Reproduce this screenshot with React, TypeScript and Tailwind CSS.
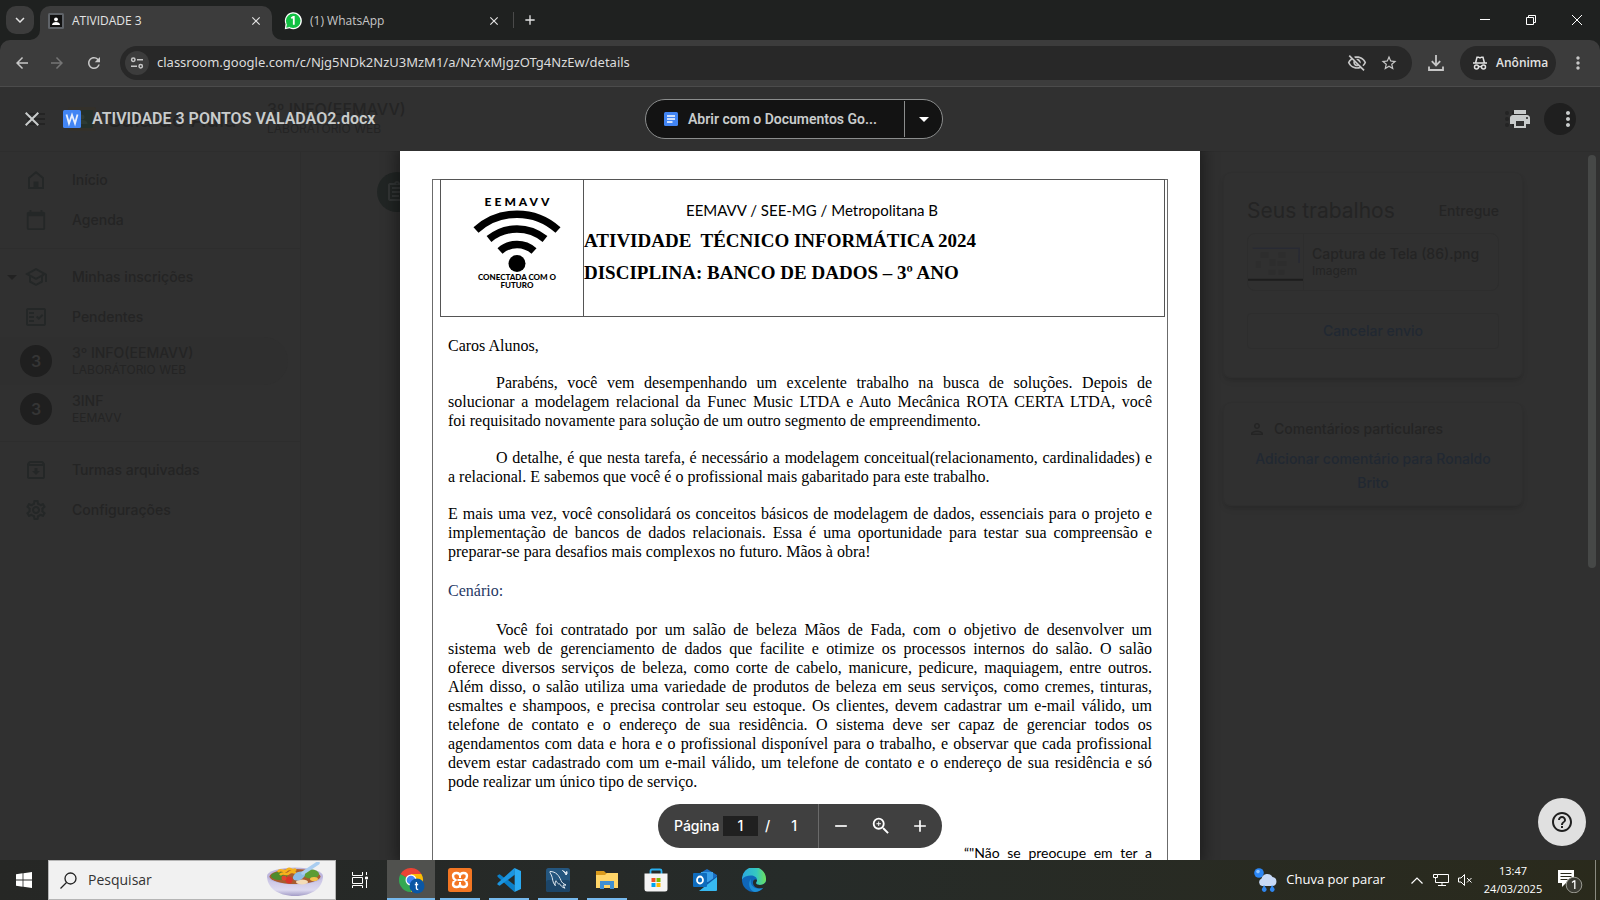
import type { ReactNode } from 'react';
import {
  MdAdd,
  MdArrowBack,
  MdArrowDropDown,
  MdArrowForward,
  MdCalendarToday,
  MdClose,
  MdHelpOutline,
  MdKeyboardArrowDown,
  MdLocalPrintshop,
  MdMenu,
  MdMoreVert,
  MdOutlineArchive,
  MdOutlineAssignment,
  MdOutlineFactCheck,
  MdOutlinePerson,
  MdOutlineSchool,
  MdOutlineSettings,
  MdOutlineVisibilityOff,
  MdRefresh,
  MdRemove,
  MdStarBorder,
  MdZoomIn,
} from 'react-icons/md';

/* ---------- Browser chrome ---------- */

function ClassroomFavicon() {
  return (
    <svg viewBox="0 0 16 16" className="size-4">
      <rect width="16" height="16" rx="1.500" fill="#5f6368" />
      <rect x="2" y="2" width="12" height="12" fill="#111" />
      <circle cx="8" cy="6.300" r="1.900" fill="#fff" />
      <path d="M4 12c0-2 2-3 4-3s4 1 4 3z" fill="#fff" />
    </svg>
  );
}

function WhatsAppFavicon() {
  return (
    <svg viewBox="0 0 18 18" className="size-[18px]">
      <path d="M.8 17.300L1.500 12A8.500 8.500 0 1 1 5.500 16.300z" fill="#fff" />
      <circle cx="9.200" cy="8.800" r="7.300" fill="#12c143" />
      <path d="M2.200 15.800l.8-3.500 2.700 2.700z" fill="#12c143" />
      <path d="M7.300 6.300l2-1.500h.5v8" fill="none" stroke="#fff" strokeWidth="1.800" />
    </svg>
  );
}

function TabStrip() {
  return (
    <header className="flex h-10 shrink-0 items-stretch bg-[#1f2120] text-xs text-[#e3e3e3]">
      <button aria-label="Pesquisar guias" className="mt-1.5 ml-1.5 flex size-7 items-center justify-center rounded-[10px] bg-[#3c3c3c]">
        <MdKeyboardArrowDown className="size-[18px]" />
      </button>
      <div className="relative ml-1.5 mt-1.5 flex w-[232px] items-center rounded-t-[10px] bg-[#3c3c3c] px-2 pb-1">
        <ClassroomFavicon />
        <span className="ml-2 grow">ATIVIDADE 3</span>
        <button aria-label="Fechar ATIVIDADE 3" className="flex size-4 items-center justify-center">
          <MdClose className="size-3.5" />
        </button>
        <svg viewBox="0 0 10 10" className="absolute -left-2.5 bottom-0 size-2.5">
          <path d="M10 0v10H0A10 10 0 0 0 10 0z" fill="#3c3c3c" />
        </svg>
        <svg viewBox="0 0 10 10" className="absolute -right-2.5 bottom-0 size-2.5">
          <path d="M0 0v10h10A10 10 0 0 1 0 0z" fill="#3c3c3c" />
        </svg>
      </div>
      <div className="ml-3 flex w-[229px] items-center pt-0.5 pr-[11px]">
        <WhatsAppFavicon />
        <span className="ml-2 grow text-[#c7c7c7]">(1) WhatsApp</span>
        <button aria-label="Fechar WhatsApp" className="flex size-4 items-center justify-center">
          <MdClose className="size-3.5" />
        </button>
      </div>
      <span className="mt-3 h-4 w-px bg-[#4a4a4a]" />
      <button aria-label="Nova guia" className="flex w-8 items-center justify-center">
        <MdAdd className="size-4" />
      </button>
      <div className="ml-auto flex items-stretch text-white">
        <button aria-label="Minimizar" className="flex w-[46px] items-center justify-center">
          <svg viewBox="0 0 10 10" className="size-2.5" stroke="currentColor">
            <path d="M0 4.500h10" />
          </svg>
        </button>
        <button aria-label="Restaurar" className="flex w-[46px] items-center justify-center">
          <svg viewBox="0 0 10 10" className="size-2.5" stroke="currentColor" fill="none">
            <path d="M.5 2.500h7v7h-7zM2.500 2.500v-2h7v7h-2" />
          </svg>
        </button>
        <button aria-label="Fechar" className="flex w-[46px] items-center justify-center">
          <svg viewBox="0 0 10 10" className="size-2.5" stroke="currentColor">
            <path d="M0 0l10 10M10 0L0 10" />
          </svg>
        </button>
      </div>
    </header>
  );
}

function Toolbar() {
  return (
    <div className="bg-[#1f2120]">
      <nav className="flex h-[47px] shrink-0 items-start rounded-t-[10px] border-b border-[#4b4b4b] bg-[#3c3c3c] pt-1.5 text-[#c7c7c7]">
        <button aria-label="Voltar" className="ml-1 flex h-[34px] w-[35px] items-center justify-center">
          <MdArrowBack className="size-[18px]" />
        </button>
        <button aria-label="Avançar" className="flex h-[34px] w-9 items-center justify-center text-[#757575]">
          <MdArrowForward className="size-[18px]" />
        </button>
        <button aria-label="Atualizar" className="flex h-[34px] w-[37px] items-center justify-center">
          <MdRefresh className="size-[18px]" />
        </button>
        <div className="ml-2 flex h-[34px] grow items-center rounded-full bg-[#282828] px-[5px]">
          <button aria-label="Informações do site" className="flex size-6 items-center justify-center rounded-full bg-[#3c3c3c]">
            <svg viewBox="0 0 14 14" className="size-3.5" fill="none" stroke="currentColor" strokeWidth="1.500">
              <circle cx="3.300" cy="3.800" r="1.700" />
              <path d="M7 3.800h6M1 10.200h6" />
              <circle cx="10.700" cy="10.200" r="1.700" />
            </svg>
          </button>
          <input
            aria-label="Barra de endereço"
            defaultValue="classroom.google.com/c/Njg5NDk2NzU3MzM1/a/NzYxMjgzOTg4NzEw/details"
            className="ml-2 w-0 grow bg-transparent font-['Noto_Sans',sans-serif] text-[13px] text-[#dcdcdc] outline-none"
          />
          <button aria-label="Cookies bloqueados" className="flex w-8 items-center justify-center">
            <MdOutlineVisibilityOff className="size-5" />
          </button>
          <button aria-label="Adicionar aos favoritos" className="mr-0.5 flex w-8 items-center justify-center">
            <MdStarBorder className="size-[18px]" />
          </button>
        </div>
        <button aria-label="Downloads" className="mx-3 flex h-[34px] w-6 items-center justify-end">
          <svg viewBox="0 0 16 16" className="mr-1 size-4" fill="none" stroke="currentColor" strokeWidth="1.800">
            <path d="M8 0v10M3.800 6.200L8 10.400l4.200-4.200M1 11.500V15h14v-3.500" />
          </svg>
        </button>
        <button className="flex h-[34px] w-24 items-center gap-2 rounded-full bg-[#282828] pl-3 text-xs font-semibold text-[#e3e3e3]">
          <svg viewBox="0 0 16 16" className="size-4" fill="none" stroke="currentColor" strokeWidth="1.500">
            <path d="M1 8h14M3.700 7.500L5 2.200h1.500L8 3l1.500-.8H11l1.300 5.300" />
            <circle cx="4.500" cy="12" r="2" />
            <circle cx="11.500" cy="12" r="2" />
            <path d="M6.500 11.600h3" />
          </svg>
          Anônima
        </button>
        <button aria-label="Menu do Chrome" className="flex h-[34px] w-11 items-center justify-center">
          <MdMoreVert className="size-5" />
        </button>
      </nav>
    </div>
  );
}

/* ---------- Classroom page under the viewer ---------- */

type SideLinkProps = { icon: ReactNode; label: string; caret?: boolean };

function HomeIcon() {
  return (
    <svg viewBox="0 0 24 24" className="size-6">
      <path d="M5 10l7-5.700L19 10v10H5z" fill="none" stroke="currentColor" strokeWidth="2" />
      <path d="M9.500 13.500h5V20h-5z" fill="currentColor" />
    </svg>
  );
}

function SideLink({ icon, label, caret }: SideLinkProps) {
  return (
    <a href="#" className="flex h-10 items-center text-sm font-medium">
      <span className="flex w-6 justify-center">{caret && <MdArrowDropDown className="size-6 text-[#222]" />}</span>
      <span className="flex w-6 justify-center text-2xl text-[#242727]">{icon}</span>
      <span className="ml-6">{label}</span>
    </a>
  );
}

function ClassLink({ name, section, active }: { name: string; section: string; active?: boolean }) {
  return (
    <a href="#" className={`mr-3 flex h-12 items-center rounded-r-full pl-5 ${active ? 'bg-[#2f2f2f]' : ''}`}>
      <span className="flex size-8 items-center justify-center rounded-full bg-[#1f1f1f] text-base font-semibold text-[#353535]">3</span>
      <span className="ml-5 flex flex-col">
        <span className="text-sm leading-[18px] font-medium">{name}</span>
        <span className="text-xs leading-4">{section}</span>
      </span>
    </a>
  );
}

function Classroom() {
  return (
    <div className="col-start-1 row-start-1 flex min-h-0 flex-col bg-[#303030] font-[Inter,sans-serif] text-[#242424]">
      <div className="flex h-[65px] shrink-0 items-center border-b border-[#2d2d2d] pr-6">
        <MdMenu className="ml-6 size-6" />
        <svg viewBox="0 0 28 24" className="ml-5 h-6 w-7">
          <rect width="28" height="24" rx="2" fill="#33302a" />
          <rect x="3" y="3" width="22" height="18" fill="#24302a" />
          <circle cx="14" cy="10" r="2.500" fill="#2e3b34" />
          <path d="M8.500 17c0-3 3-4 5.500-4s5.500 1 5.500 4z" fill="#2e3b34" />
        </svg>
        <span className="ml-3 w-[159px] text-[22px]">Sala de Aula</span>
        <div className="flex grow flex-col">
          <span className="text-base leading-5 font-medium">3º INFO(EEMAVV)</span>
          <span className="text-xs leading-5">LABORÁTORIO WEB</span>
        </div>
        <svg viewBox="0 0 20 20" className="mr-5 size-5" fill="#242424">
          <circle cx="3" cy="4" r="2" />
          <circle cx="3" cy="10" r="2" />
          <circle cx="3" cy="16" r="2" />
          <circle cx="10" cy="4" r="2" />
          <circle cx="10" cy="10" r="2" />
          <circle cx="10" cy="16" r="2" />
        </svg>
        <span className="size-8 rounded-full bg-[#1f1f1f]" />
      </div>
      <div className="flex min-h-0 grow">
        <aside className="w-[301px] shrink-0 border-r border-[#2d2d2d] pt-2">
          <SideLink icon={<HomeIcon />} label="Início" />
          <SideLink icon={<MdCalendarToday className="size-[22px]" />} label="Agenda" />
          <hr className="my-2 border-[#2d2d2d]" />
          <SideLink caret icon={<MdOutlineSchool />} label="Minhas inscrições" />
          <SideLink icon={<MdOutlineFactCheck />} label="Pendentes" />
          <ClassLink active name="3º INFO(EEMAVV)" section="LABORÁTORIO WEB" />
          <ClassLink name="3INF" section="EEMAVV" />
          <hr className="my-2 border-[#2d2d2d]" />
          <SideLink icon={<MdOutlineArchive />} label="Turmas arquivadas" />
          <SideLink icon={<MdOutlineSettings />} label="Configurações" />
        </aside>
        <div className="flex grow justify-between overflow-hidden pt-5 pr-[77px] pl-[76px]">
          <span className="flex size-10 items-center justify-center rounded-full bg-[#212524] text-[#323535]">
            <MdOutlineAssignment className="size-6" />
          </span>
          <div className="flex w-[300px] flex-col gap-6">
            <section className="h-[206px] rounded-lg border border-[#2e2e2e] px-[23px] pt-5 shadow-md shadow-black/10">
              <div className="flex h-9 items-center justify-between">
                <h2 className="text-[21px]">Seus trabalhos</h2>
                <span className="text-sm font-medium">Entregue</span>
              </div>
              <a href="#" className="mt-1 flex h-[58px] overflow-hidden rounded-lg border border-[#2d2d2d]">
                <svg viewBox="0 0 56 56" className="h-14 w-14 shrink-0 border-r border-[#2d2d2d]">
                  <path d="M5 14h47v15" fill="none" stroke="#282a33" strokeWidth="1.500" />
                  <path d="M13 18h8v6h-8zM31 18h7v6h-7zM8 27h5v7H8zM22 25h6v7h-6zM30 27h9v5h-9zM21 36h7v5h-7zM31 36h6v5h-6z" fill="#2d2d2d" />
                  <path d="M0 46h56" stroke="#1d1d1d" strokeWidth="2" />
                </svg>
                <span className="flex flex-col justify-center pl-2">
                  <span className="text-sm leading-[18px] font-medium whitespace-nowrap">Captura de Tela (86).png</span>
                  <span className="text-xs leading-4">Imagem</span>
                </span>
              </a>
              <button className="mt-[22px] h-9 w-full rounded border border-[#2d2d2d] text-sm font-medium text-[#212832]">Cancelar envio</button>
            </section>
            <section className="rounded-lg border border-[#2e2e2e] px-6 pt-4 pb-2.5 shadow-md shadow-black/10">
              <h3 className="flex h-5 items-center gap-2 text-sm font-medium">
                <MdOutlinePerson className="size-[18px]" />
                Comentários particulares
              </h3>
              <button className="mt-2 w-full text-center text-sm leading-6 font-medium text-[#212832]">Adicionar comentário para Ronaldo Brito</button>
            </section>
          </div>
        </div>
      </div>
    </div>
  );
}

/* ---------- Document ---------- */

function SchoolLogo() {
  return (
    <div className="ml-2.5 flex h-[136px] flex-col items-center pt-3.5 font-[Lato,sans-serif] font-black text-black">
      <span className="pl-[3px] text-xs leading-[15px] tracking-[3px]">EEMAVV</span>
      <svg viewBox="0 0 90 64" className="h-16 w-[90px]" fill="none" stroke="#000" strokeWidth="7.500">
        <path d="M4 21A61 61 0 0 1 86 21" />
        <path d="M17 30A44 44 0 0 1 73 30" />
        <path d="M28 42A25.500 25.500 0 0 1 62 42" />
        <circle cx="45" cy="54.500" r="8.500" fill="#000" stroke="none" />
      </svg>
      <span className="text-center text-[8px] leading-2">
        CONECTADA COM O
        <br />
        FUTURO
      </span>
    </div>
  );
}

/* A paragraph with fixed line breaks: every line but the last is justified. */
function Paragraph({ lines, indent }: { lines: string[]; indent?: boolean }) {
  return (
    <p className="text-base leading-[19px]">
      {lines.map((line, i) => (
        <span
          key={line}
          className={`block whitespace-nowrap ${i < lines.length - 1 ? 'text-justify [text-align-last:justify]' : ''} ${indent && i === 0 ? 'pl-12' : ''}`}
        >
          {line}{' '}
        </span>
      ))}
    </p>
  );
}

function DocumentPage() {
  return (
    <article className="w-[800px] shrink-0 overflow-hidden bg-white px-8 pt-7 font-['Liberation_Serif',serif] text-black shadow-[0_0_14px_4px_rgba(0,0,0,0.4)]">
      <div className="h-[900px] border border-[#6b6b6b]">
        <table className="-mt-px ml-[7px] w-[725px] border-collapse border border-[#555]">
          <tbody>
            <tr>
              <td className="w-[143px] border border-[#555] p-0 align-top">
                <SchoolLogo />
              </td>
              <td className="p-0 align-top">
                <p className="pt-[18px] pl-[102px] font-[Lato,sans-serif] text-[15px] leading-6">EEMAVV / SEE-MG / Metropolitana B</p>
                <p className="pt-[3px] text-[19px] leading-8 font-bold whitespace-pre">ATIVIDADE  TÉCNICO INFORMÁTICA 2024</p>
                <p className="text-[19px] leading-8 font-bold">DISCIPLINA: BANCO DE DADOS – 3º ANO</p>
              </td>
            </tr>
          </tbody>
        </table>
        <div className="flex flex-col gap-[18px] px-[15px] pt-[19px]">
          <Paragraph lines={['Caros Alunos,']} />
          <Paragraph
            indent
            lines={[
              'Parabéns, você vem desempenhando um excelente trabalho na busca de soluções. Depois de',
              'solucionar a modelagem relacional da Funec Music LTDA e Auto Mecânica ROTA CERTA LTDA, você',
              'foi requisitado novamente para solução de um outro segmento de empreendimento.',
            ]}
          />
          <Paragraph
            indent
            lines={[
              'O detalhe, é que nesta tarefa, é necessário a modelagem conceitual(relacionamento, cardinalidades) e',
              'a relacional. E sabemos que você é o profissional mais gabaritado para este trabalho.',
            ]}
          />
          <Paragraph
            lines={[
              'E mais uma vez, você consolidará os conceitos básicos de modelagem de dados, essenciais para o projeto e',
              'implementação de bancos de dados relacionais. Essa é uma oportunidade para testar sua compreensão e',
              'preparar-se para desafios mais complexos no futuro. Mãos à obra!',
            ]}
          />
          <h2 className="py-0.5 text-base leading-[19px] text-[#1f3864]">Cenário:</h2>
          <Paragraph
            indent
            lines={[
              'Você foi contratado por um salão de beleza Mãos de Fada, com o objetivo de desenvolver um',
              'sistema web de gerenciamento de dados que facilite e otimize os processos internos do salão. O salão',
              'oferece diversos serviços de beleza, como corte de cabelo, manicure, pedicure, maquiagem, entre outros.',
              'Além disso, o salão utiliza uma variedade de produtos de beleza em seus serviços, como cremes, tinturas,',
              'esmaltes e shampoos, e precisa controlar seu estoque. Os clientes, devem cadastrar um e-mail válido, um',
              'telefone de contato e o endereço de sua residência. O sistema deve ser capaz de gerenciar todos os',
              'agendamentos com data e hora e o profissional disponível para o trabalho, e observar que cada profissional',
              'devem estar cadastrado com um e-mail válido, um telefone de contato e o endereço de sua residência e só',
              'pode realizar um único tipo de serviço.',
            ]}
          />
          <p className="mt-[34px] w-[188px] self-end font-[Lato,sans-serif] text-sm leading-[19px] [text-align-last:justify]">“"Não se preocupe em ter a</p>
        </div>
      </div>
    </article>
  );
}

/* ---------- Viewer ---------- */

function Viewer() {
  return (
    <div className="relative z-10 col-start-1 row-start-1 flex min-h-0 flex-col overflow-hidden font-[Inter,sans-serif]">
      <div className="grid h-16 shrink-0 grid-cols-[1fr_298px_1fr] items-center pr-3 font-[Roboto,sans-serif] text-[#c9cccc]">
        <div className="flex items-center pl-5">
          <button aria-label="Fechar visualizador" className="flex size-6 items-center justify-center">
            <MdClose className="size-6" />
          </button>
          <svg viewBox="0 0 18 18" className="ml-[19px] size-[18px]">
            <rect width="18" height="18" rx="1.500" fill="#4285f4" />
            <path d="M3.500 4.500l2.500 9 3-8.500 3 8.500 2.500-9" fill="none" stroke="#e8effc" strokeWidth="1.800" />
          </svg>
          <h1 className="ml-[11px] text-base font-semibold whitespace-nowrap">ATIVIDADE 3 PONTOS VALADAO2.docx</h1>
        </div>
        <div className="flex h-10 items-center rounded-full border border-[#8b8d8d] bg-[#131313]">
          <button className="flex h-full grow items-center pl-[18px] text-sm font-semibold">
            <svg viewBox="0 0 14 14" className="mr-[10px] size-3.5">
              <rect width="14" height="14" rx="1.500" fill="#4285f4" />
              <path d="M3 4h8M3 7h8M3 10h5.500" stroke="#fff" strokeWidth="1.300" />
            </svg>
            Abrir com o Documentos Go...
          </button>
          <button aria-label="Mais opções de abertura" className="my-px flex h-9 w-[38px] items-center justify-center border-l border-[#8b8d8d] text-white">
            <MdArrowDropDown className="size-6" />
          </button>
        </div>
        <div className="flex items-center justify-end pr-2">
          <button aria-label="Imprimir" className="flex size-6 items-center justify-center">
            <MdLocalPrintshop className="size-6" />
          </button>
          <button aria-label="Mais ações" className="ml-6 flex size-6 items-center justify-center">
            <MdMoreVert className="size-6" />
          </button>
        </div>
      </div>
      <div className="flex min-h-0 grow justify-center overflow-hidden">
        <DocumentPage />
      </div>
      <div className="absolute bottom-3 left-1/2 flex h-11 w-[284px] -translate-x-1/2 items-center rounded-full bg-[#404040] text-sm font-medium text-white">
        <label htmlFor="page" className="ml-4 w-[49px]">
          Página
        </label>
        <input id="page" defaultValue="1" className="h-5 w-[35px] bg-[#202020] text-center outline-none" />
        <span className="ml-[7px]">/</span>
        <span className="w-12 text-center">1</span>
        <div className="flex h-full grow items-center justify-between border-l border-[#6a6a6a] pr-3 pl-3">
          <button aria-label="Diminuir zoom">
            <MdRemove className="size-5" />
          </button>
          <button aria-label="Ajustar zoom">
            <MdZoomIn className="size-[22px]" />
          </button>
          <button aria-label="Aumentar zoom">
            <MdAdd className="size-5" />
          </button>
        </div>
      </div>
      <span className="absolute top-[68px] right-1 h-[413px] w-2 rounded-full bg-[#464847]" />
      <button aria-label="Ajuda" className="absolute right-3.5 bottom-3.5 flex size-12 items-center justify-center rounded-full bg-[#e0e0e0] text-[#1f1f1f]">
        <MdHelpOutline className="size-6" />
      </button>
    </div>
  );
}

/* ---------- Taskbar ---------- */

const icon = 'size-6';

function TaskButton({ label, state, children }: { label: string; state?: 'active' | 'open'; children: ReactNode }) {
  return (
    <button aria-label={label} className={`flex w-12 flex-col items-center pt-2 ${state === 'active' ? 'bg-[#50514e]' : ''}`}>
      {children}
      {state && <span className={`mt-auto h-0.5 bg-[#76b9ed] ${state === 'active' ? 'w-12' : 'w-10'}`} />}
    </button>
  );
}

function BowlIllustration() {
  return (
    <svg viewBox="0 0 58 36" className="h-9 w-[58px]">
      <defs>
        <linearGradient id="bowlSide" x1="0" y1="0" x2="0" y2="1">
          <stop offset="0" stopColor="#c3bde0" />
          <stop offset="0.700" stopColor="#dddaf0" />
          <stop offset="1" stopColor="#a39cc6" />
        </linearGradient>
      </defs>
      <path d="M1 14c0 11 10 20 28 20s28-9 28-20z" fill="url(#bowlSide)" />
      <ellipse cx="29" cy="14" rx="28" ry="8.500" fill="#bdb6dd" />
      <ellipse cx="29" cy="14.500" rx="25.500" ry="7.500" fill="#a85c2e" />
      <ellipse cx="13" cy="14" rx="8" ry="4" fill="#4e8b2c" />
      <ellipse cx="45" cy="12" rx="8" ry="4.500" fill="#5c9c33" />
      <path d="M12 10c3-5 6 2 9-2s5 3 9-1M14 13c3-4 6 1 9-2s4 1 7-1" fill="none" stroke="#f6b21b" strokeWidth="2.500" />
      <circle cx="23" cy="18" r="3.500" fill="#d8342a" />
      <circle cx="18" cy="16" r="2.500" fill="#e2452f" />
      <ellipse cx="36" cy="20" rx="6" ry="2.500" fill="#f3dcb8" />
      <ellipse cx="48" cy="17" rx="4" ry="2" fill="#f2c14a" />
      <ellipse cx="33" cy="14" rx="6.500" ry="4" fill="#8dbbe6" transform="rotate(-25 33 14)" />
      <path d="M37 11L52 1" stroke="#a9cdf0" strokeWidth="3.500" strokeLinecap="round" />
    </svg>
  );
}

function Taskbar() {
  return (
    <footer className="flex h-10 shrink-0 items-stretch bg-linear-to-r from-[#262725] via-[#262b29] to-[#2a2a1c] font-['Open_Sans',sans-serif] text-white">
      <button aria-label="Iniciar" className="flex w-12 items-center justify-center">
        <svg viewBox="0 0 16 16" className="size-4" fill="#fff">
          <path d="M0 2.200l6.600-.9v6.300H0zM7.400 1.200L16 0v7.600H7.400zM0 8.400h6.600v6.300L0 13.800zM7.400 8.400H16V16l-8.600-1.200z" />
        </svg>
      </button>
      <label className="flex w-72 items-center border border-[#b5b5b5] bg-[#f1f1f1] px-[11px]">
        <svg viewBox="0 0 17 17" className="size-[17px]" fill="none" stroke="#222" strokeWidth="1.300">
          <circle cx="10.500" cy="6.500" r="5.500" />
          <path d="M6.500 10.500L.5 16.500" />
        </svg>
        <input aria-label="Pesquisar" placeholder="Pesquisar" className="ml-[11px] w-0 grow bg-transparent text-sm outline-none placeholder:text-[#333]" />
        <BowlIllustration />
      </label>
      <button aria-label="Visão de tarefas" className="flex w-12 items-center justify-center">
        <svg viewBox="0 0 16 16" className="size-4" fill="none" stroke="#fff">
          <path d="M.5 0v3.500h10V0M.5 5.500h10v6H.5zM.5 16v-2.500h10V16M14.500 0v3M14.500 8v8" />
          <path d="M13.500 5h2v2h-2z" fill="#fff" />
        </svg>
      </button>
      <div className="ml-[3px] flex gap-px">
        <TaskButton label="Google Chrome" state="active">
          <svg viewBox="0 0 26 26" className="ml-0.5 size-[26px]">
            <path d="M12 12L1.600 6A12 12 0 0 0 12 24l5-9z" fill="#34a853" />
            <path d="M12 12v12A12 12 0 0 0 22.400 6H12z" fill="#fbbc04" />
            <path d="M12 12L1.600 6A12 12 0 0 1 22.400 6H12z" fill="#ea4335" />
            <circle cx="12" cy="12" r="5.500" fill="#fff" />
            <circle cx="12" cy="12" r="4.300" fill="#4285f4" />
            <circle cx="18" cy="18" r="7.500" fill="#0b57a4" />
            <path d="M17.400 14v6.500q0 1 1.800 1M15.800 16.500h3.400" fill="none" stroke="#fff" strokeWidth="1.300" />
          </svg>
        </TaskButton>
        <TaskButton label="XAMPP" state="open">
          <svg viewBox="0 0 24 24" className={icon}>
            <rect width="24" height="24" rx="2.500" fill="#f37623" />
            <path
              d="M12 7.500C11.500 4 5 4 5 8c0 2 .8 3 2.300 4C5.800 13 5 14 5 16c0 4 6.500 4 7 .5.5 3.500 7 3.500 7-.5 0-2-.8-3-2.300-4C18.200 11 19 10 19 8c0-4-6.500-4-7-.5z"
              fill="none"
              stroke="#fff"
              strokeWidth="2.400"
            />
            <path d="M12 7v3M12 14v3M9.500 12h5" stroke="#fff" strokeWidth="2" />
          </svg>
        </TaskButton>
        <TaskButton label="Visual Studio Code" state="open">
          <svg viewBox="0 0 24 24" className={icon}>
            <path d="M17.500 0L7.500 10 2.700 6.200.5 7.300v1.500L17.500 24z" fill="#0a7fc9" />
            <path d="M17.500 0v6.500L2.700 17.800.5 16.700v-1.500z" fill="#1b95e0" />
            <path d="M17.500 0L24 3v18l-6.500 3z" fill="#2aaaf2" />
            <path d="M17.500 7v10L11 12z" fill="#262b29" />
          </svg>
        </TaskButton>
        <TaskButton label="MySQL Workbench" state="open">
          <svg viewBox="0 0 24 24" className={icon}>
            <rect width="24" height="24" rx="2.500" fill="#24567f" />
            <rect y="12" width="24" height="12" rx="2.500" fill="#1c4568" />
            <path d="M4 3.500c6 0 9 4 11 9 .8 2 2 3.200 5 4.500l-3 .2 2 3c-3-.7-4.500-3-5.500-4.500-1.500 1-2-1-3.500-3-1 1.500-1.200 3-.7 5C6 14 7 10 5.300 7 4.500 5.500 3.700 4.500 4 3.500z" fill="none" stroke="#dfe8f0" />
            <path d="M16.500 2.500l3 2 1.500-1v2.500l-1 1-1-2z" fill="#dfe8f0" stroke="#dfe8f0" />
          </svg>
        </TaskButton>
        <TaskButton label="Explorador de Arquivos" state="open">
          <svg viewBox="0 0 24 24" className={icon}>
            <path d="M1 3h8l2 2h12v6H1z" fill="#d99a1c" />
            <path d="M1 7h9l2-2h11v15H1z" fill="#ffd568" />
            <path d="M5 21v-8h14v8h-4v-4H9v4z" fill="#3f8fd2" />
          </svg>
        </TaskButton>
        <TaskButton label="Microsoft Store">
          <svg viewBox="0 0 24 24" className={icon}>
            <path d="M6.500 6V3q0-1.500 1.500-1.500h8q1.500 0 1.500 1.500v3" fill="none" stroke="#29b0f0" strokeWidth="1.800" />
            <path d="M.5 5.500h23V21q0 2.500-2.500 2.500H3Q.5 23.500.5 21z" fill="#f4f4f4" />
            <path d="M7.500 10h4v4h-4z" fill="#f25022" />
            <path d="M12.500 10h4v4h-4z" fill="#7fba00" />
            <path d="M7.500 15h4v4h-4z" fill="#00a4ef" />
            <path d="M12.500 15h4v4h-4z" fill="#ffb900" />
          </svg>
        </TaskButton>
        <TaskButton label="Outlook">
          <svg viewBox="0 0 24 24" className={icon}>
            <path d="M4 7l10-6 10 6v12H4z" fill="#1a6fc4" />
            <path d="M8 4h12v10H8z" fill="#3aa0ea" />
            <path d="M24 8L12 16l12 6z" fill="#0e59a8" />
            <path d="M24 9v13q0 1-1 1H6z" fill="#37b9f1" />
            <rect y="5" width="14" height="14" rx="1" fill="#0f6cbd" />
            <ellipse cx="7" cy="12" rx="3" ry="3.500" fill="none" stroke="#fff" strokeWidth="1.800" />
          </svg>
        </TaskButton>
        <TaskButton label="Microsoft Edge">
          <svg viewBox="0 0 24 24" className={icon}>
            <defs>
              <linearGradient id="edgeTop" x1="0" x2="1">
                <stop offset="0" stopColor="#2aa8e0" />
                <stop offset="0.600" stopColor="#35c8c0" />
                <stop offset="1" stopColor="#6ee05a" />
              </linearGradient>
            </defs>
            <circle cx="12" cy="12" r="12" fill="#0f66b8" />
            <path d="M0 11.500A12 12 0 0 1 24 10.500c.5 4-2.500 6.500-6 6.500-2.500 0-4-1-4-2 0-.8 1-1.300 1-3 0-3-3-4.500-6-4.500C5 7.500 1.500 9 0 11.500z" fill="url(#edgeTop)" />
            <path d="M9 11c-1.500 5 2.500 9.500 7 9.500 2.500 0 4.500-.8 6-1.800A12 12 0 0 1 13 24C7 23 5.500 14 9 11z" fill="#1d8fd6" />
            <path d="M15 12c0 1.700-1 2.200-1 3 0 1 1.500 2 4 2 2 0 4.500-.8 5.500-3l1 4-2 1.500c-5 2-11.500.5-11.500-5 0-1.500 1-4 4-2.500z" fill="#262b28" />
          </svg>
        </TaskButton>
      </div>
      <div className="ml-auto flex items-center">
        <button className="flex items-center text-[13px]">
          <svg viewBox="0 0 24 24" className="mr-2 size-6">
            <circle cx="5" cy="5" r="4.800" fill="#2a86f5" />
            <circle cx="4" cy="3.600" r="1.800" fill="#8fc4ff" />
            <path d="M8 18a4 4 0 0 1-.5-7.500A6 6 0 0 1 18.500 9a4.600 4.600 0 0 1 .5 9z" fill="#c6d9f7" />
            <path d="M10 17l2 3a2.300 2.300 0 1 1-3.500 0zM18 17l2 3a2.300 2.300 0 1 1-3.500 0z" fill="#2f86ee" />
          </svg>
          Chuva por parar
        </button>
        <button aria-label="Mostrar ícones ocultos" className="ml-5 flex w-6 justify-center">
          <svg viewBox="0 0 12 7" className="h-[7px] w-3" fill="none" stroke="#fff" strokeWidth="1.200">
            <path d="M.5 6.500L6 1l5.500 5.500" />
          </svg>
        </button>
        <button aria-label="Rede" className="flex w-6 justify-center">
          <svg viewBox="0 0 16 14" className="h-3.5 w-4" fill="none" stroke="#fff">
            <path d="M4.500 1.500h11v8h-13v-3M9 9.500v3M5 12.500h8M.5 1.500h4v3h-4zM2.500 4.500v2" />
          </svg>
        </button>
        <button aria-label="Volume" className="flex w-6 justify-center">
          <svg viewBox="0 0 16 14" className="h-3.5 w-4" fill="none" stroke="#fff">
            <path d="M1.500 5H4l3.500-3.500v11L4 9H1.500zM10 5l4.500 4.500M14.500 5L10 9.500" />
          </svg>
        </button>
        <button className="flex w-[72px] flex-col items-center text-[11px] leading-[18px]">
          <span>13:47</span>
          <span>24/03/2025</span>
        </button>
        <button aria-label="Notificações" className="ml-2 flex">
          <svg viewBox="0 0 26 26" className="size-[26px]">
            <path d="M1 3h16v13H9l-4 4v-4H1z" fill="#fff" />
            <path d="M3.500 6.500h11M3.500 9.500h11M3.500 12.500h7" stroke="#2a2a1c" />
            <circle cx="17" cy="18" r="7.800" fill="#3b3b33" stroke="#9a9a92" />
            <path d="M15 15.500l2.200-1.500h.6v8" fill="none" stroke="#fff" strokeWidth="1.300" />
          </svg>
        </button>
        <span className="ml-3 h-full w-px bg-[#8a8a80]" />
        <span className="w-1" />
      </div>
    </footer>
  );
}

export default function App() {
  return (
    <div className="flex h-screen flex-col overflow-hidden bg-[#303030] font-['Open_Sans',sans-serif]">
      <TabStrip />
      <Toolbar />
      <main className="grid min-h-0 grow grid-cols-1 grid-rows-1 overflow-hidden">
        <Classroom />
        <Viewer />
      </main>
      <Taskbar />
    </div>
  );
}
